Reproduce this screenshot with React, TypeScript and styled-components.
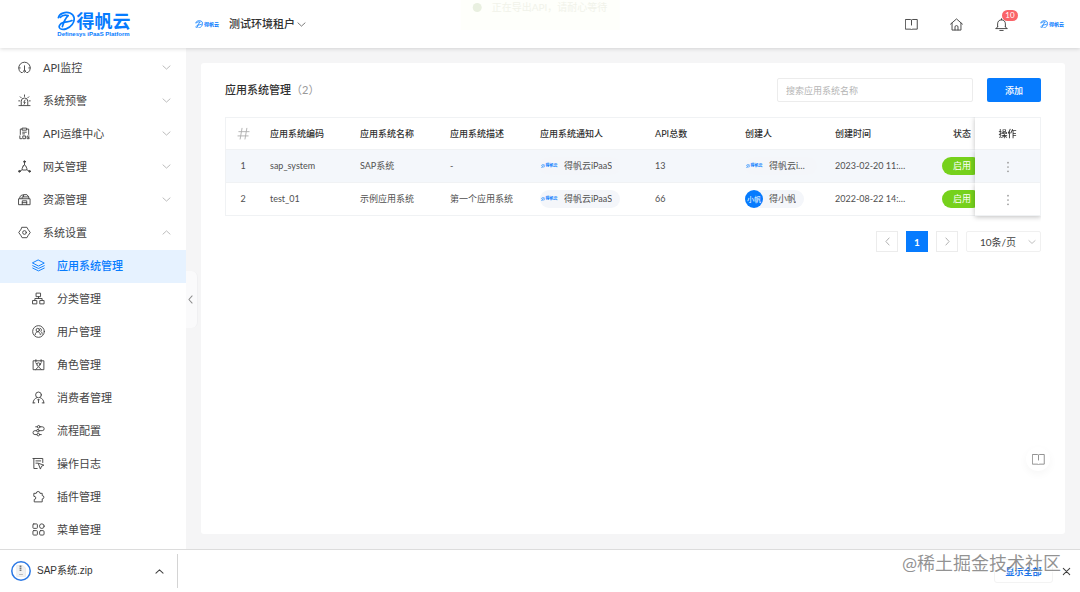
import React from "react";
import styled, { createGlobalStyle, css } from "styled-components";

const BLUE = "#067bfe";
const SANS = `Lato, "Noto Sans CJK SC", sans-serif`;

const GlobalStyle = createGlobalStyle`
  *, *::before, *::after { box-sizing: border-box; }
  body { margin: 0; background: #fff; color: #444; font-family: ${SANS}; font-size: 11px; }
  button, input, select { font-family: inherit; }
  button { cursor: pointer; }
`;

/* ---------- icons ---------- */

const Svg = styled.svg<{ $size?: number }>`
  display: block;
  flex: none;
  width: ${(p) => p.$size ?? 13}px;
  height: ${(p) => p.$size ?? 13}px;
  fill: none;
  stroke: currentColor;
  stroke-linecap: round;
  stroke-linejoin: round;
`;

const shapes = {
  gauge: (
    <>
      <path d="M4.6 12.4H3.2A6.2 6.2 0 1 1 10.8 12.4H9.4M7 5.2V10M.9 7.5H2.4M13.1 7.5H11.6" />
      <circle cx="7" cy="11" r="1" />
    </>
  ),
  alarm: (
    <path d="M3.5 12V7.8a3.5 3.5 0 0 1 7 0V12M1 12.5H13M7.6 6.5 6.2 9H7.8L6.6 11M7 1V2.6M2.4 3l1.1 1.1M11.6 3l-1.1 1.1M.8 7.4H2M13.2 7.4H12" />
  ),
  log: (
    <path d="M4.5 2.2H2.5V8M9.5 2.2H11.5V8M4.8 1.2H9.2V3.4H4.8zM5 5.6H9M5 7.4H7M2 9.6V12.6H4M5.6 9.6H8V12.6H5.6zM12 9.8H9.8V12.6H12V11.4H11.2" />
  ),
  gateway: (
    <>
      <path d="M7 2.6V5.2M5.6 6.4 4.4 9.4Q4 10.8 5.4 10.8H8.6Q10 10.8 9.6 9.4L8.4 6.4Q7 4.2 5.6 6.4zM4.4 10.6 2 12M9.6 10.6 12 12" />
      <g fill="currentColor">
        <circle cx="7" cy="1.8" r=".9" />
        <circle cx="1.5" cy="12.2" r=".9" />
        <circle cx="12.5" cy="12.2" r=".9" />
      </g>
    </>
  ),
  resource: (
    <path d="M1 6.2H13V12.6H1zM2 6V4L4.2 2.2H6M4.4 6V4.2H11.6V6M6 4V1.8H9.6L11.4 4M4.6 12.4V8.4H9.4V12.4M4.6 10.4H9.4" />
  ),
  gear: (
    <>
      <path d="M4.4 1.4H9.6L10.8 3.6 13.2 7 10.8 10.4 9.6 12.6H4.4L3.2 10.4.8 7 3.2 3.6z" />
      <circle cx="7" cy="7" r="2" />
    </>
  ),
  layers: (
    <path d="M7 1.2 13.2 4.4 7 7.6.8 4.4zM.8 7.2 7 10.2 13.2 7.2M.8 9.8 7 12.8 13.2 9.8" />
  ),
  tree: (
    <path d="M4.8 1.2H9.2V5H4.8zM1 9.2H5.2V12.8H1zM8.8 9.2H13V12.8H8.8zM7 5V7M3.1 9V7H10.9V9" />
  ),
  users: (
    <>
      <circle cx="7" cy="7" r="6.3" />
      <circle cx="6.2" cy="5.4" r="1.8" />
      <path d="M3.4 10.4C3.6 8.4 4.8 7.3 6.2 7.3S8.8 8.4 9 10.4M8.6 3.6C10.4 3.6 10.8 6 9.4 6.8 10.4 7.4 10.9 8.4 11 9.8" />
    </>
  ),
  role: (
    <>
      <path d="M4.2 3H1.2V12.6H12.8V3H9.8M4.2 1.8V4.2M9.8 1.8V4.2M4.2 3H9.8M4 12.4 7 9.4 10 12.4M4 5.4 5.6 6.6M10 5.4 8.4 6.6" />
      <circle cx="7" cy="7" r="1.8" />
    </>
  ),
  consumer: (
    <>
      <circle cx="7" cy="4.2" r="3.1" />
      <path d="M1.2 12.8C1.2 9.6 3.2 8 5.2 7.2M12.8 12.8C12.8 9.6 10.8 8 8.8 7.2M7 9.4V12.6M6.2 9.4H7.8M1.2 12.8H3M12.8 12.8H11" />
    </>
  ),
  flow: (
    <>
      <circle cx="7.2" cy="3" r="1.4" />
      <circle cx="6.4" cy="7.2" r="1.4" />
      <circle cx="6.8" cy="11.4" r="1.4" />
      <path d="M8.8 3H11A2.1 2.1 0 0 1 11 7.2H8M4.8 7.2H3.2A2.1 2.1 0 0 0 3.2 11.4H5.2M4 3H5.6M8.4 11.4H10" />
    </>
  ),
  oplog: (
    <path d="M11.6 6V1.6H2V12.4H5.6M2 1.6H1M4.2 4.2H9.4M4.2 6.6H6M7 6.8 12.8 8.8 10.3 9.9 9.2 12.6z" />
  ),
  plugin: (
    <path d="M2.4 3.6H4.6A2 2 0 1 1 8.6 3.6H11V6A1.8 1.8 0 1 1 11 9.6V12.8H2.4V10.2A1.7 1.7 0 0 0 2.4 6.8z" />
  ),
  grid: (
    <>
      <rect x="1" y="1" width="4.8" height="4.8" rx=".9" />
      <circle cx="10.6" cy="3.4" r="2.5" />
      <rect x="1" y="8.2" width="4.8" height="4.8" rx=".9" />
      <rect x="8.2" y="8.2" width="4.8" height="4.8" rx="1.2" />
    </>
  ),
  book: (
    <path d="M.8 1.6H5.8Q7 1.6 7 2.8 7 1.6 8.2 1.6H13.2V12H8.4Q7.2 12 7 12.8 6.8 12 5.6 12H.8zM7 3V7.6" />
  ),
  home: (
    <path d="M.6 6.6 7 1 13.4 6.6M2.2 5.6V13H11.8V5.6M5.4 12.8V9.6Q5.4 8.2 7 8.2T8.6 9.6V12.8" />
  ),
  bell: (
    <path d="M1 11.4H13M2.8 9.4V6.4C2.8 3.6 4.6 2 7 2S11.2 3.6 11.2 6.4V9.4M2.8 9.4 1.2 11.4M11.2 9.4 12.8 11.4M7 .8V2M5.2 13.4H8.8" />
  ),
  down: <path d="M1.5 4.5 7 9.5 12.5 4.5" />,
  up: <path d="M1.5 9.5 7 4.5 12.5 9.5" />,
  left: <path d="M9.5 1.5 4.5 7 9.5 12.5" />,
  right: <path d="M4.5 1.5 9.5 7 4.5 12.5" />,
  close: <path d="M2 2 12 12M12 2 2 12" />,
  hash: <path d="M2 5H13M1 9.6H12M5.4 1.4 3.4 13M10.6 1.4 8.6 13" />,
  more: (
    <g fill="currentColor" stroke="none">
      <circle cx="7" cy="2" r="1" />
      <circle cx="7" cy="7" r="1" />
      <circle cx="7" cy="12" r="1" />
    </g>
  ),
};

type IconName = keyof typeof shapes;

const Icon = ({ name, size, weight }: { name: IconName; size?: number; weight?: number }) => (
  <Svg viewBox="0 0 14 14" $size={size} strokeWidth={weight ?? 1} aria-hidden="true">
    {shapes[name]}
  </Svg>
);

/* ---------- brand ---------- */

const Mark = styled.svg<{ $w: number }>`
  display: block;
  flex: none;
  width: ${(p) => p.$w}px;
  aspect-ratio: 18 / 20;
  fill: none;
  stroke: ${BLUE};
  stroke-width: 1.7;
  stroke-linecap: round;
`;

const BrandMark = ({ w }: { w: number }) => (
  <Mark viewBox="0 0 18 20" $w={w} aria-hidden="true">
    <path d="M1.4 6.6C2.4 2.2 8.6.6 13 2 18 3.8 18.2 9.6 15.2 13.6 12 17.8 6.4 19.6 3.2 17.6 1 16 2.6 12.6 6.6 11.4 9.4 10.6 12.2 11 15 9.6" />
    <path d="M11.2 4.6C8.6 7 6.6 11.4 5.4 15.6M3.2 6.4C5 4.4 8 3.6 11.2 4.6" />
  </Mark>
);

const MiniBrand = styled.span<{ $text: number }>`
  display: inline-flex;
  align-items: center;
  gap: 1px;
  color: ${BLUE};
  font-size: ${(p) => p.$text}px;
  line-height: 1;
  font-weight: 700;
  white-space: nowrap;
`;

/* ---------- header ---------- */

const Page = styled.div`
  position: relative;
  display: flex;
  flex-direction: column;
  min-height: 100vh;
`;

const Header = styled.header`
  position: relative;
  z-index: 3;
  display: flex;
  align-items: center;
  height: 48px;
  padding-right: 16px;
  background: #fff;
  box-shadow: 0 1px 4px rgba(0, 0, 0, 0.14);
`;

const LogoArea = styled.div`
  display: flex;
  flex-direction: column;
  align-items: center;
  flex: none;
  width: 187px;
`;

const LogoRow = styled.div`
  display: flex;
  align-items: center;
  gap: 2px;
  height: 20px;
  color: ${BLUE};
  font-size: 18px;
  line-height: 20px;
  font-weight: 700;
`;

const Tagline = styled.div`
  color: ${BLUE};
  font: 700 6px/7px "Liberation Sans", sans-serif;
`;

const Tenant = styled.button`
  display: flex;
  align-items: center;
  margin-left: 8px;
  padding: 0;
  border: 0;
  background: none;
  color: #303030;
  font-size: 11px;
  line-height: 16px;
  font-weight: 500;
`;

const TenantName = styled.span`
  margin: 0 2px 0 10px;
`;

const Tools = styled.div`
  display: flex;
  align-items: center;
  gap: 32px;
  margin-left: auto;
`;

const IconButton = styled.button`
  position: relative;
  padding: 0;
  border: 0;
  background: none;
  color: #404040;
`;

const Badge = styled.span`
  position: absolute;
  top: -8px;
  left: 7px;
  width: 16px;
  height: 11px;
  border-radius: 6px;
  background: #fa6469;
  color: #fff;
  font-size: 8px;
  line-height: 11px;
  text-align: center;
`;

const Toast = styled.div`
  position: absolute;
  top: -16px;
  left: 50%;
  transform: translateX(-50%);
  z-index: 4;
  display: flex;
  align-items: center;
  gap: 10px;
  height: 46px;
  padding: 0 12px;
  background: #fefffb;
  color: #f1f3ea;
  font-size: 10px;
  line-height: 16px;
  white-space: nowrap;
`;

const ToastDot = styled.span`
  width: 9px;
  height: 9px;
  border-radius: 50%;
  background: #e9f0e0;
`;

/* ---------- side menu ---------- */

const Body = styled.div`
  display: flex;
  flex: 1;
  background: #f5f5f6;
`;

const Sidebar = styled.nav`
  position: relative;
  flex: none;
  width: 186px;
  padding: 4px 0 2px;
  background: #fff;
`;

const menuItem = css`
  display: flex;
  align-items: center;
  gap: 12px;
  height: 33px;
  color: #444;
  font-size: 11px;
  line-height: 16px;
`;

const MenuGroup = styled.button`
  ${menuItem}
  width: 100%;
  padding: 0 15px 2px 18px;
  border: 0;
  background: none;
  text-align: left;
`;

const MenuArrow = styled.span`
  margin-left: auto;
  color: #b4b4b4;
`;

const MenuLink = styled.a<{ $active?: boolean }>`
  ${menuItem}
  padding: 0 0 2px 32px;
  text-decoration: none;
  ${(p) =>
    p.$active &&
    css`
      background: #e6f2ff;
      color: ${BLUE};
      font-weight: 500;
    `}
`;

const Collapse = styled.button`
  position: absolute;
  top: 223px;
  left: 100%;
  width: 12px;
  height: 57px;
  padding: 0;
  border: 0;
  border-right: 1px solid #f0f0f2;
  border-radius: 0 6px 6px 0;
  background: #fafafb;
  color: #8c8c8c;
`;

/* ---------- content ---------- */

const Main = styled.main`
  flex: 1;
  min-width: 0;
  display: flex;
  padding: 15px;
`;

const Card = styled.section`
  flex: 1;
  min-width: 0;
  padding: 15px 24px 24px;
  border-radius: 3px;
  background: #fff;
`;

const TitleBar = styled.div`
  display: flex;
  align-items: center;
  margin-bottom: 15px;
`;

const Title = styled.h1`
  margin: 0 auto 0 0;
  color: #303030;
  font-size: 11px;
  line-height: 16px;
  font-weight: 500;
`;

const Count = styled.span`
  color: #999;
  font-weight: 400;
`;

const Search = styled.input`
  width: 196px;
  height: 24px;
  padding: 0 8px;
  border: 1px solid #ececec;
  border-radius: 2px;
  font-size: 9px;
  outline: none;
  &::placeholder {
    color: #b5b5b5;
  }
`;

const AddButton = styled.button`
  width: 54px;
  height: 24px;
  margin-left: 14px;
  padding: 0;
  border: 0;
  border-radius: 2px;
  background: ${BLUE};
  color: #fff;
  font-size: 9px;
  font-weight: 500;
`;

const TableScroll = styled.div`
  overflow-x: auto;
  overflow-y: hidden;
  scrollbar-width: none;
  padding-bottom: 6px;
`;

const Table = styled.table`
  width: 100%;
  min-width: 849px;
  table-layout: fixed;
  border-collapse: separate;
  border-spacing: 0;
  font-size: 9px;
  line-height: 14px;
`;

const Row = styled.tr<{ $hover?: boolean }>`
  height: 33px;
  background: ${(p) => (p.$hover ? "#f4f7fb" : "#fff")};
`;

const cell = css<{ $center?: boolean }>`
  padding: ${(p) => (p.$center ? "0" : "0 8px 0 10px")};
  border-bottom: 1px solid #f0f2f4;
  background: inherit;
  text-align: ${(p) => (p.$center ? "center" : "left")};
  white-space: nowrap;
  overflow: hidden;
  text-overflow: ellipsis;

  &:first-child {
    border-left: 1px solid #f0f2f4;
  }
  &:last-child {
    position: sticky;
    right: 0;
    z-index: 1;
    overflow: visible;
    border-right: 1px solid #f0f2f4;
    box-shadow: 0 1px 5px rgba(0, 0, 0, 0.25);
    clip-path: inset(0 0 0 -6px);
  }
  tbody tr:last-child > &:last-child {
    clip-path: inset(0 -6px -6px -6px);
  }
`;

const Th = styled.th<{ $center?: boolean }>`
  ${cell}
  border-top: 1px solid #f0f2f4;
  color: #303030;
  font-weight: 500;
`;

const Td = styled.td<{ $center?: boolean }>`
  ${cell}
  color: #505050;
`;

const HashMark = styled.span`
  display: flex;
  justify-content: center;
  color: #b0b0b0;
`;

const Person = styled.span`
  display: inline-flex;
  align-items: center;
  gap: 6px;
  max-width: 100%;
  height: 18px;
  padding-right: 8px;
  border-radius: 9px;
  background: #f4f6fa;
  vertical-align: middle;
`;

const Avatar = styled.span<{ $filled?: boolean }>`
  display: flex;
  align-items: center;
  justify-content: center;
  flex: none;
  width: 18px;
  height: 18px;
  border-radius: 50%;
  background: ${(p) => (p.$filled ? BLUE : "transparent")};
  color: #fff;
  font-size: 7px;
  line-height: 18px;
`;

const PersonName = styled.span`
  overflow: hidden;
  text-overflow: ellipsis;
`;

const Status = styled.span`
  display: inline-block;
  width: 40px;
  height: 18px;
  border-radius: 9px;
  background: #76d11c;
  color: #fff;
  line-height: 18px;
  vertical-align: middle;
`;

const MoreButton = styled.button`
  display: inline-block;
  padding: 0;
  border: 0;
  background: none;
  color: #999;
  vertical-align: middle;
`;

const Pagination = styled.div`
  display: flex;
  justify-content: flex-end;
  gap: 8px;
  margin-top: 9px;
`;

const PageButton = styled.button<{ $active?: boolean }>`
  display: flex;
  align-items: center;
  justify-content: center;
  width: 22px;
  height: 21px;
  padding: 0;
  border: 1px solid ${(p) => (p.$active ? BLUE : "#ececec")};
  background: ${(p) => (p.$active ? BLUE : "#fff")};
  color: ${(p) => (p.$active ? "#fff" : "#a8a8a8")};
  font-size: 10px;
  font-weight: 700;
`;

const SizePicker = styled.label`
  position: relative;
  display: flex;
  align-items: center;
  justify-content: flex-end;
  width: 75px;
  height: 21px;
  padding-right: 5px;
  color: #b0b0b0;
`;

const SizeSelect = styled.select`
  position: absolute;
  inset: 0;
  width: 100%;
  padding: 0 13px;
  appearance: none;
  border: 1px solid #f0f0f0;
  border-radius: 2px;
  background: transparent;
  color: #444;
  font-size: 10px;
`;

const HelpButton = styled.button`
  position: absolute;
  right: 30px;
  bottom: 121px;
  display: flex;
  align-items: center;
  justify-content: center;
  width: 24px;
  height: 24px;
  padding: 0;
  border: 0;
  border-radius: 50%;
  background: #fff;
  color: #8a8a8a;
  box-shadow: 0 3px 8px rgba(0, 0, 0, 0.04);
`;

/* ---------- download bar ---------- */

const DownloadBar = styled.footer`
  display: flex;
  align-items: center;
  height: 43px;
  padding-right: 9px;
  border-top: 1px solid #dcdcdc;
  background: #fff;
`;

const DownloadItem = styled.div`
  display: flex;
  align-items: center;
  gap: 6px;
  width: 178px;
  height: 34px;
  padding: 0 13px 0 11px;
  border-right: 1px solid #d4d4d4;
  color: #333;
  font: 10px/16px "Liberation Sans", "Noto Sans CJK SC", sans-serif;
`;

const ItemMenu = styled(IconButton)`
  margin-left: auto;
`;

const ShowAll = styled.button`
  width: 59px;
  height: 24px;
  margin-left: auto;
  padding: 0;
  border: 1px solid #f3f3f3;
  border-radius: 3px;
  background: #fff;
  color: #1a73e8;
  font-size: 9px;
  font-weight: 700;
`;

const CloseButton = styled(IconButton)`
  margin-left: 9px;
`;

const Watermark = styled.div`
  position: absolute;
  right: 19px;
  bottom: 16px;
  color: rgba(110, 110, 110, 0.75);
  font-size: 18px;
  line-height: 26px;
  text-shadow: 1px 1px 1px #fff;
  white-space: nowrap;
  pointer-events: none;
`;

/* ---------- data ---------- */

const groups: { icon: IconName; label: string; open?: boolean }[] = [
  { icon: "gauge", label: "API监控" },
  { icon: "alarm", label: "系统预警" },
  { icon: "log", label: "API运维中心" },
  { icon: "gateway", label: "网关管理" },
  { icon: "resource", label: "资源管理" },
  { icon: "gear", label: "系统设置", open: true },
];

const links: { icon: IconName; label: string; active?: boolean }[] = [
  { icon: "layers", label: "应用系统管理", active: true },
  { icon: "tree", label: "分类管理" },
  { icon: "users", label: "用户管理" },
  { icon: "role", label: "角色管理" },
  { icon: "consumer", label: "消费者管理" },
  { icon: "flow", label: "流程配置" },
  { icon: "oplog", label: "操作日志" },
  { icon: "plugin", label: "插件管理" },
  { icon: "grid", label: "菜单管理" },
];

const systems = [
  { code: "sap_system", name: "SAP系统", desc: "-", notify: "得帆云iPaaS", apis: 13, creator: "得帆云iPaaS", time: "2023-02-20 11:20:36" },
  { code: "test_01", name: "示例应用系统", desc: "第一个应用系统", notify: "得帆云iPaaS", apis: 66, creator: "得小帆", initials: "小帆", time: "2022-08-22 14:08:12" },
];

const PersonTag = ({ name, initials }: { name: string; initials?: string }) => (
  <Person>
    <Avatar $filled={!!initials}>
      {initials ?? (
        <MiniBrand $text={4}>
          <BrandMark w={4} />
          得帆云
        </MiniBrand>
      )}
    </Avatar>
    <PersonName>{name}</PersonName>
  </Person>
);

export default function App() {
  return (
    <Page>
      <GlobalStyle />
      <Header>
        <LogoArea>
          <LogoRow>
            <BrandMark w={18} />
            得帆云
          </LogoRow>
          <Tagline>Definesys iPaaS Platform</Tagline>
        </LogoArea>
        <Tenant>
          <MiniBrand $text={5}>
            <BrandMark w={8} />
            得帆云
          </MiniBrand>
          <TenantName>测试环境租户</TenantName>
          <Icon name="down" size={9} />
        </Tenant>
        <Tools>
          <IconButton aria-label="文档"><Icon name="book" /></IconButton>
          <IconButton aria-label="首页"><Icon name="home" /></IconButton>
          <IconButton aria-label="通知">
            <Icon name="bell" />
            <Badge>10</Badge>
          </IconButton>
          <MiniBrand $text={5}>
            <BrandMark w={8} />
            得帆云
          </MiniBrand>
        </Tools>
        <Toast role="status">
          <ToastDot />
          正在导出API，请耐心等待
        </Toast>
      </Header>

      <Body>
        <Sidebar>
          {groups.map((g) => (
            <MenuGroup key={g.label} aria-expanded={!!g.open}>
              <Icon name={g.icon} />
              {g.label}
              <MenuArrow>
                <Icon name={g.open ? "up" : "down"} size={9} weight={1.4} />
              </MenuArrow>
            </MenuGroup>
          ))}
          {links.map((l) => (
            <MenuLink key={l.label} href="#" $active={l.active}>
              <Icon name={l.icon} />
              {l.label}
            </MenuLink>
          ))}
          <Collapse aria-label="收起菜单"><Icon name="left" size={9} weight={1.6} /></Collapse>
        </Sidebar>

        <Main>
          <Card>
            <TitleBar>
              <Title>
                应用系统管理<Count>（2）</Count>
              </Title>
              <Search aria-label="搜索" placeholder="搜索应用系统名称" />
              <AddButton>添加</AddButton>
            </TitleBar>

            <TableScroll>
              <Table>
                <colgroup>
                  <col width={35} />
                  <col width={90} />
                  <col width={90} />
                  <col width={90} />
                  <col width={115} />
                  <col width={90} />
                  <col width={90} />
                  <col width={90} />
                  <col width={94} />
                  <col width={66} />
                </colgroup>
                <thead>
                  <Row>
                    <Th $center><HashMark><Icon name="hash" /></HashMark></Th>
                    <Th>应用系统编码</Th>
                    <Th>应用系统名称</Th>
                    <Th>应用系统描述</Th>
                    <Th>应用系统通知人</Th>
                    <Th>API总数</Th>
                    <Th>创建人</Th>
                    <Th>创建时间</Th>
                    <Th $center>状态</Th>
                    <Th $center>操作</Th>
                  </Row>
                </thead>
                <tbody>
                  {systems.map((s, i) => (
                    <Row key={s.code} $hover={i === 0}>
                      <Td $center>{i + 1}</Td>
                      <Td>{s.code}</Td>
                      <Td>{s.name}</Td>
                      <Td>{s.desc}</Td>
                      <Td><PersonTag name={s.notify} /></Td>
                      <Td>{s.apis}</Td>
                      <Td><PersonTag name={s.creator} initials={s.initials} /></Td>
                      <Td>{s.time}</Td>
                      <Td $center><Status>启用</Status></Td>
                      <Td $center>
                        <MoreButton aria-label="更多"><Icon name="more" size={12} /></MoreButton>
                      </Td>
                    </Row>
                  ))}
                </tbody>
              </Table>
            </TableScroll>

            <Pagination>
              <PageButton aria-label="上一页"><Icon name="left" size={9} weight={1.4} /></PageButton>
              <PageButton $active>1</PageButton>
              <PageButton aria-label="下一页"><Icon name="right" size={9} weight={1.4} /></PageButton>
              <SizePicker>
                <SizeSelect aria-label="每页条数">
                  <option>10条/页</option>
                  <option>20条/页</option>
                </SizeSelect>
                <Icon name="down" size={8} weight={1.4} />
              </SizePicker>
            </Pagination>
          </Card>
        </Main>
      </Body>

      <HelpButton aria-label="帮助文档"><Icon name="book" /></HelpButton>

      <DownloadBar>
        <DownloadItem>
          <Svg viewBox="0 0 20 20" $size={20} aria-hidden="true">
            <path d="M6 4.5H12L14.5 7V15.5H6z" fill="#f1f1f1" stroke="#e4e4e4" strokeWidth=".6" />
            <path d="M9.5 4.5V10" stroke="#777" strokeWidth="1.8" strokeDasharray="1.4 .6" strokeLinecap="butt" />
            <path d="M8.5 13.5H11.5" stroke="#bbb" />
            <circle cx="10" cy="10" r="9.2" stroke="#2b78e4" strokeWidth="1.5" />
          </Svg>
          SAP系统.zip
          <ItemMenu aria-label="下载选项"><Icon name="up" size={9} weight={1.6} /></ItemMenu>
        </DownloadItem>
        <ShowAll>显示全部</ShowAll>
        <CloseButton aria-label="关闭"><Icon name="close" size={9} weight={1.6} /></CloseButton>
      </DownloadBar>
      <Watermark>@稀土掘金技术社区</Watermark>
    </Page>
  );
}
